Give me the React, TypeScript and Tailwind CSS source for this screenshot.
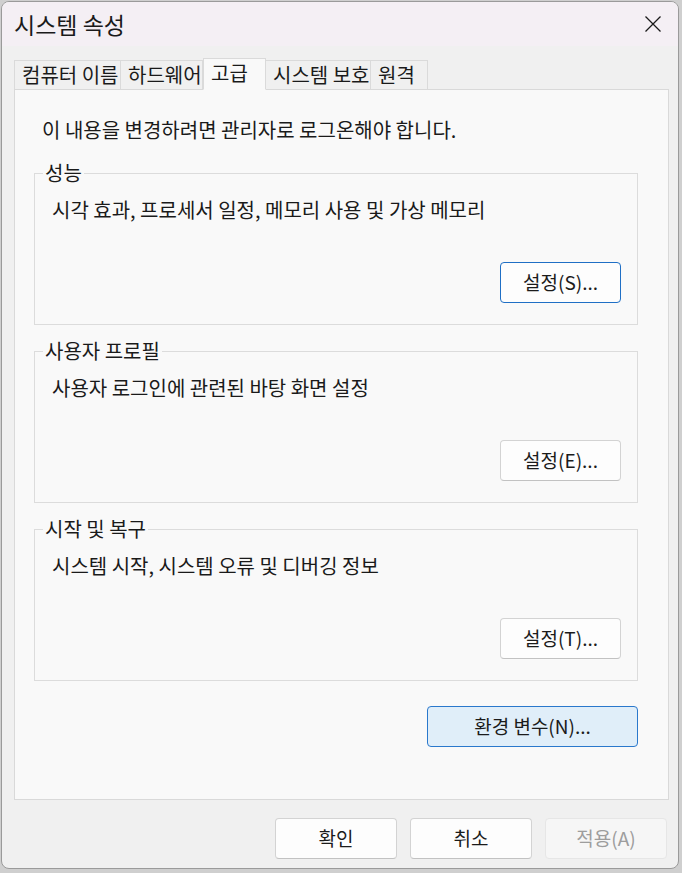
import React from "react";

const font = { fontFamily: '"Noto Sans CJK KR", "Noto Sans", sans-serif' };

const tabs = [
  { label: "컴퓨터 이름", w: "w-[107px]" },
  { label: "하드웨어", w: "w-[83px]" },
  { label: "고급", w: "w-[63px]", active: true },
  { label: "시스템 보호", w: "w-[106px]" },
  { label: "원격", w: "w-[58px]" },
];

const groups = [
  { title: "성능", desc: "시각 효과, 프로세서 일정, 메모리 사용 및 가상 메모리", button: "설정(S)...", primary: true },
  { title: "사용자 프로필", desc: "사용자 로그인에 관련된 바탕 화면 설정", button: "설정(E)..." },
  { title: "시작 및 복구", desc: "시스템 시작, 시스템 오류 및 디버깅 정보", button: "설정(T)..." },
];

function Button({ children, primary, className = "" }: { children: React.ReactNode; primary?: boolean; className?: string }) {
  return (
    <button
      className={
        "h-[41px] rounded-[4px] border bg-[#fdfdfd] text-[19px] text-[#1b1b1b] " +
        (primary ? "border-[#1f6fc5] " : "border-[#d3d3d3] border-b-[#c2c2c2] ") +
        className
      }
    >
      {children}
    </button>
  );
}

function Group({ title, desc, button, primary }: { title: string; desc: string; button: string; primary?: boolean }) {
  return (
    <fieldset className="border border-[#dcdcdc] px-0 pb-[21px]">
      <legend className="ml-[8px] px-[2px] text-[20px] leading-[28px]">{title}</legend>
      <p className="mt-[9px] pl-[17px] text-[20px] leading-[28px]">{desc}</p>
      <div className="mt-[38px] flex justify-end pr-[16px]">
        <Button primary={primary} className="w-[121px]">
          {button}
        </Button>
      </div>
    </fieldset>
  );
}

export default function App() {
  return (
    <div className="h-[873px] w-[682px] bg-[#cfcfcf] pl-[1px] pt-[1px]" style={font}>
      <div className="flex h-[868px] w-[678px] flex-col overflow-hidden rounded-[8px] border border-[#9a9a9a] bg-[#f0f0f0] text-[#1a1a1a]">
        <div className="flex h-[44px] shrink-0 items-center justify-between bg-[#f4eff4] pl-[12px] pr-[17px]">
          <span className="text-[23px]">시스템 속성</span>
          <svg width="16" height="16" viewBox="0 0 16 16" className="text-[#1a1a1a]">
            <path d="M0.5 0.5 L15.5 15.5 M15.5 0.5 L0.5 15.5" stroke="currentColor" strokeWidth="1.3" fill="none" />
          </svg>
        </div>

        <div className="ml-[12px] mt-[12px] flex items-end">
          {tabs.map((t) => (
            <div
              key={t.label}
              className={
                t.w +
                " -mb-[1px] border border-[#dadada] pl-[7px] text-[20px] " +
                (t.active
                  ? "relative z-10 h-[32px] border-b-[#f9f9f9] bg-[#f9f9f9] leading-[28px]"
                  : "-ml-[1px] h-[30px] bg-[#f0f0f0] leading-[28px] first:ml-0")
              }
            >
              {t.label}
            </div>
          ))}
        </div>

        <div className="ml-[12px] flex h-[711px] w-[655px] flex-col border border-[#d9d9d9] bg-[#f9f9f9] pl-[19px] pr-[30px]">
          <p className="mt-[26px] pl-[8px] text-[20px] leading-[28px]">이 내용을 변경하려면 관리자로 로그온해야 합니다.</p>
          <div className="mt-[15px] flex flex-col gap-[12px]">
            {groups.map((g) => (
              <Group key={g.title} {...g} />
            ))}
          </div>
          <div className="mt-[25px] flex justify-end">
            <button className="h-[41px] w-[211px] rounded-[4px] border border-[#2a78cc] bg-[#e0eef9] text-[19px] text-[#1b1b1b]">
              환경 변수(N)...
            </button>
          </div>
        </div>

        <div className="mt-[18px] flex justify-end gap-[13px] pr-[11px]">
          <Button className="w-[122px]">확인</Button>
          <Button className="w-[122px]">취소</Button>
          <button className="h-[41px] w-[122px] rounded-[4px] border border-[#e6e6e6] bg-[#f6f6f6] text-[19px] text-[#9d9d9d]">
            적용(A)
          </button>
        </div>
      </div>
    </div>
  );
}
